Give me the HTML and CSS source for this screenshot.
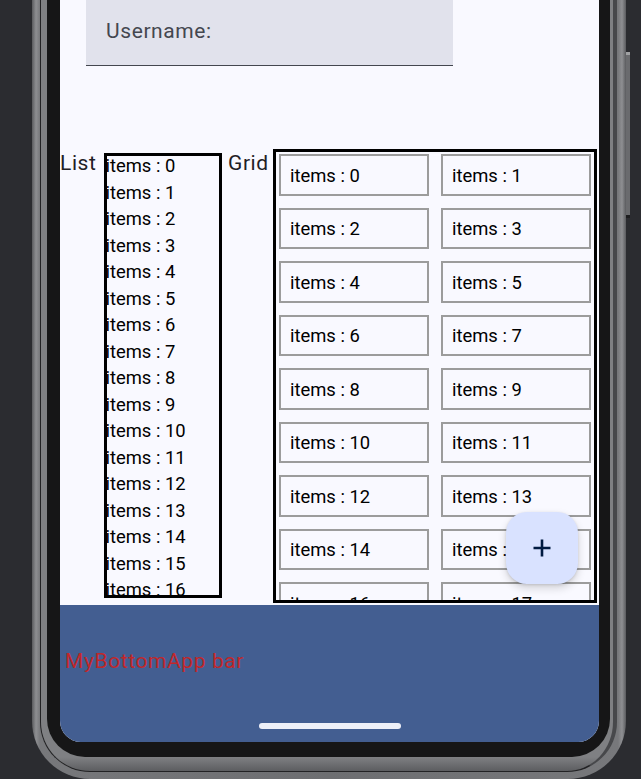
FILE: index.html
```html
<!DOCTYPE html>
<html lang="en">
<head>
<meta charset="utf-8">
<title>Lists</title>
<link rel="stylesheet" href="styles.css">
</head>
<body>
<div class="device">
  <div class="side-button"></div>
  <div class="rim">
    <div class="bezel">
      <div class="screen">
        <div class="content">
          <div class="textfield">
            <span class="textfield-label">Username:</span>
          </div>
          <div class="row">
            <div class="label label-list">List</div>
            <div class="list">
              <div class="list-item">items : 0</div>
              <div class="list-item">items : 1</div>
              <div class="list-item">items : 2</div>
              <div class="list-item">items : 3</div>
              <div class="list-item">items : 4</div>
              <div class="list-item">items : 5</div>
              <div class="list-item">items : 6</div>
              <div class="list-item">items : 7</div>
              <div class="list-item">items : 8</div>
              <div class="list-item">items : 9</div>
              <div class="list-item">items : 10</div>
              <div class="list-item">items : 11</div>
              <div class="list-item">items : 12</div>
              <div class="list-item">items : 13</div>
              <div class="list-item">items : 14</div>
              <div class="list-item">items : 15</div>
              <div class="list-item">items : 16</div>
            </div>
            <div class="label label-grid">Grid</div>
            <div class="grid">
              <div class="cell">items : 0</div>
              <div class="cell">items : 1</div>
              <div class="cell">items : 2</div>
              <div class="cell">items : 3</div>
              <div class="cell">items : 4</div>
              <div class="cell">items : 5</div>
              <div class="cell">items : 6</div>
              <div class="cell">items : 7</div>
              <div class="cell">items : 8</div>
              <div class="cell">items : 9</div>
              <div class="cell">items : 10</div>
              <div class="cell">items : 11</div>
              <div class="cell">items : 12</div>
              <div class="cell">items : 13</div>
              <div class="cell">items : 14</div>
              <div class="cell">items : 15</div>
              <div class="cell">items : 16</div>
              <div class="cell">items : 17</div>
            </div>
          </div>
        </div>
        <div class="bottombar">
          <div class="bottombar-text">MyBottomApp bar</div>
          <div class="nav-handle"></div>
        </div>
        <button class="fab" aria-label="Add">
          <svg width="20" height="20" viewBox="0 0 20 20" aria-hidden="true">
            <path d="M10 1.5V18.5M1.5 10H18.5" stroke="#001a41" stroke-width="2.6" fill="none"/>
          </svg>
        </button>
      </div>
    </div>
  </div>
</div>
</body>
</html>
```

FILE: styles.css
```css
html, body {
  margin: 0;
  padding: 0;
}
body {
  background: #2b2c30;
  height: 779px;
  overflow: hidden;
  font-family: Roboto, "Liberation Sans", sans-serif;
}

.device {
  position: relative;
  box-sizing: border-box;
  width: 594px;
  margin: -40px 0 0 32px;
  padding: 0 9px 7px 8px;
  background: linear-gradient(90deg, #5a5b5e 0, #8e8f92 4px, #77787b 8px, #6d6e71 50%, #77787b calc(100% - 8px), #8e8f92 calc(100% - 4px), #5a5b5e 100%);
  border-radius: 0 0 58px 58px;
}
.side-button {
  position: absolute;
  right: -4px;
  top: 92px;
  width: 4px;
  height: 160px;
  background: #6a6b6e;
  border-top: 3px solid #a0a1a3;
  border-bottom: 3px solid #1d1d1f;
}
.rim {
  border: 1px solid #222224;
  border-top: none;
  border-right: 4px solid #47484b;
  padding: 0 3px 14px 6px;
  background: linear-gradient(180deg, #7f8083 0, #7f8083 calc(100% - 14px), #5c5d60 100%);
  border-radius: 0 0 50px 50px;
}
.bezel {
  background: #161617;
  padding: 0 11px 15px 13px;
  border-radius: 0 0 38px 38px;
}
.screen {
  position: relative;
  display: flex;
  flex-direction: column;
  height: 782px;
  background: #f9f9ff;
  border-radius: 0 0 21px 21px;
  overflow: hidden;
}

.content {
  flex: 1;
  padding-top: 32px;
}
.textfield {
  box-sizing: border-box;
  width: 367px;
  height: 74px;
  margin-left: 26px;
  padding: 26.5px 0 0 20px;
  background: #e1e2ec;
  border-bottom: 1.4px solid #44474f;
}
.textfield-label {
  font-size: 21px;
  letter-spacing: 0.6px;
  color: #44474f;
}

.row {
  display: flex;
  align-items: flex-start;
  margin-top: 83px;
}
.label {
  box-sizing: border-box;
  padding-top: 1.5px;
  font-size: 21px;
  letter-spacing: 0.6px;
  color: #1f2025;
}
.label-list {
  width: 44px;
}
.label-grid {
  width: 45px;
  margin-left: 6px;
}
.list {
  box-sizing: border-box;
  width: 118px;
  height: 445px;
  margin-top: 4px;
  padding-left: 1.5px;
  overflow: hidden;
  outline: 3px solid #000;
  outline-offset: -3px;
}
.list-item {
  font-size: 18.4px;
  line-height: 26.5px;
  color: #000;
  white-space: nowrap;
}
.grid {
  box-sizing: border-box;
  width: 324px;
  height: 454px;
  padding: 5.3px 6px 0;
  overflow: hidden;
  outline: 3px solid #000;
  outline-offset: -3px;
  display: grid;
  grid-template-columns: 150px 150px;
  grid-auto-rows: 41.5px;
  column-gap: 12px;
  row-gap: 12px;
  align-content: start;
}
.cell {
  box-sizing: border-box;
  display: flex;
  align-items: center;
  padding-left: 9px;
  border: 2px solid #9c9c9c;
  font-size: 18.4px;
  color: #000;
  white-space: nowrap;
}

.bottombar {
  height: 137px;
  box-sizing: border-box;
  background: #435e91;
  padding-top: 43.5px;
  display: flex;
  flex-direction: column;
}
.bottombar-text {
  padding-left: 5px;
  font-size: 21px;
  letter-spacing: 0.6px;
  color: #c0272a;
  line-height: 24.6px;
}
.nav-handle {
  width: 142px;
  height: 6px;
  margin: 49.5px auto 0;
  border-radius: 3px;
  background: #eef0f8;
}

.fab {
  position: absolute;
  right: 21px;
  bottom: 158px;
  width: 72.5px;
  height: 72.5px;
  border: none;
  padding: 0;
  border-radius: 21px;
  background: #d9e2ff;
  box-shadow: 0 4px 8px rgba(0, 0, 0, 0.16), 0 1px 3px rgba(0, 0, 0, 0.12);
  display: flex;
  align-items: center;
  justify-content: center;
}
.fab svg {
  display: block;
}
```
